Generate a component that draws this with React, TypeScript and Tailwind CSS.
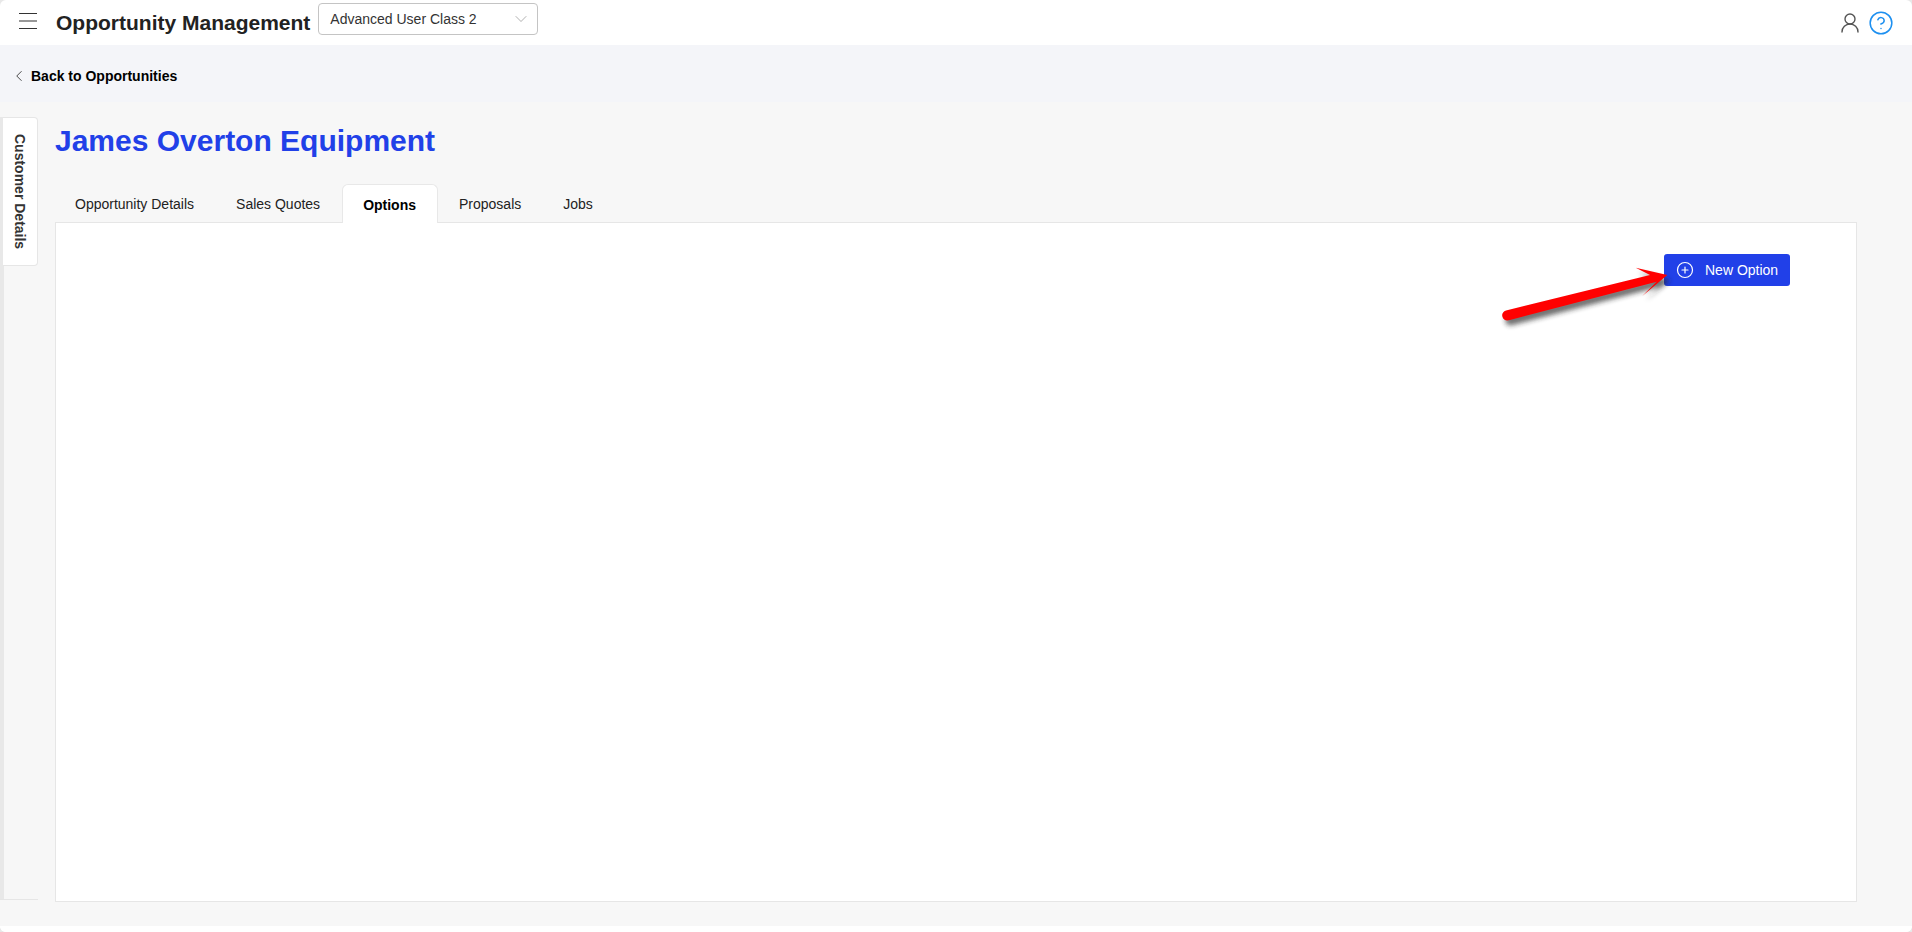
import { ChevronDown, ChevronLeft, CircleHelp, CirclePlus, UserRound } from "lucide-react"

const tabs = [
  { label: "Opportunity Details", cls: "flex items-center pl-[20px] pr-[21px] pt-[2px]" },
  { label: "Sales Quotes", cls: "flex items-center pl-[21px] pr-[22px] pt-[2px]" },
  {
    label: "Options",
    cls: "relative z-10 flex h-[39px] items-center rounded-t-[6px] border border-b-0 border-[#e8e8e8] bg-white pl-[20px] pr-[21px] pt-[2px] font-bold text-black",
  },
  { label: "Proposals", cls: "flex items-center px-[21px] pt-[2px]" },
  { label: "Jobs", cls: "flex items-center px-[21px] pt-[2px]" },
]

function Arrow() {
  const shape = "M141.7 7.7 L173.3 15 L148.3 36 L162.7 21.7 L16 60 Q10 61.5 8.5 57 Q7 52.5 12 50.5 L156 15 Z"
  return (
    <svg className="absolute left-[-170px] top-[6px] overflow-visible" width="176" height="60" viewBox="0 0 176 60" fill="none">
      <defs>
        <filter id="arrow-shadow" x="-20%" y="-50%" width="140%" height="220%">
          <feGaussianBlur stdDeviation="2.5" />
        </filter>
      </defs>
      <path d={shape} fill="#222" opacity="0.65" filter="url(#arrow-shadow)" transform="translate(3 5)" />
      <path d={shape} fill="#ff0000" />
    </svg>
  )
}

function Hamburger() {
  return (
    <svg width="18" height="18" viewBox="0 0 18 18" stroke="#333" strokeWidth="1.2" fill="none">
      <path d="M0 1.5H18M0 9H18M0 16.5H18" />
    </svg>
  )
}

export default function App() {
  return (
    <div className="h-[932px] w-[1912px] overflow-hidden bg-[#e8e8e8]">
      <div className="flex h-full flex-col overflow-hidden rounded-[6px] bg-white font-['Liberation_Sans',Arial,sans-serif]">
        {/* Top bar */}
        <header className="flex h-[45px] shrink-0 items-center pl-[19px] pr-[18px]">
          <div className="mb-[4px] flex">
            <Hamburger />
          </div>
          <h1 className="ml-[19px] text-[21px] leading-[26px] font-bold text-[#222]">Opportunity Management</h1>
          <div className="ml-[8px] mb-[7px] flex h-[32px] w-[220px] items-center justify-between rounded-[4px] border border-[#c4c4c4] pl-[11px] pr-[6px] text-[14px] text-[#333]">
            <span>Advanced User Class 2</span>
            <ChevronDown size={20} strokeWidth={0.8} className="text-[#888]" />
          </div>
          <div className="ml-auto flex items-center gap-[6px]">
            <UserRound size={24} strokeWidth={1.4} className="text-[#555]" />
            <CircleHelp size={26} strokeWidth={1.4} className="text-[#1e90f0]" />
          </div>
        </header>

        {/* Back link */}
        <div className="flex h-[57px] shrink-0 items-center bg-[#f4f5f9] pl-[10px] pt-[6px]">
          <ChevronLeft size={18} strokeWidth={1.3} className="mb-[2px] text-[#444]" />
          <span className="ml-[3px] text-[14px] font-bold text-black">Back to Opportunities</span>
        </div>

        {/* Content */}
        <div className="flex min-h-0 flex-1 bg-[#f7f7f7]">
          <aside className="mb-[26px] w-[38px] shrink-0 border-b border-b-[#e6e6e6] pt-[15px]">
            <div className="relative h-full w-[4px] bg-[#e8e8e8]">
              <div className="absolute left-[3px] top-0 flex h-[149px] w-[35px] items-center justify-center rounded-r-[4px] border border-l-0 border-[#e6e6e6] bg-white pr-[1px]">
                <span className="text-[14px] font-bold text-[#333] [writing-mode:vertical-rl]">Customer Details</span>
              </div>
            </div>
          </aside>

          <main className="ml-[17px] flex w-[1802px] flex-col pb-[24px]">
            <h2 className="mt-[22px] text-[30px] leading-[34px] font-bold text-[#2140e8]">James Overton Equipment</h2>

            <nav className="mt-[26px] flex h-[38px] items-stretch text-[14px] text-[#222]">
              {tabs.map((t) => (
                <div key={t.label} className={t.cls}>
                  {t.label}
                </div>
              ))}
            </nav>

            <section className="flex min-h-0 flex-1 items-start justify-end border border-[#e6e6e6] bg-white pt-[31px] pr-[66px]">
              <div className="relative">
                <button className="flex h-[32px] w-[126px] items-center rounded-[3px] bg-[#2140e8] pl-[12px] text-[14px] text-white">
                  <CirclePlus size={18} strokeWidth={1.6} />
                  <span className="ml-[11px]">New Option</span>
                </button>
                <Arrow />
              </div>
            </section>
          </main>
        </div>

        <div className="h-[6px] shrink-0 bg-white" />
      </div>
    </div>
  )
}
